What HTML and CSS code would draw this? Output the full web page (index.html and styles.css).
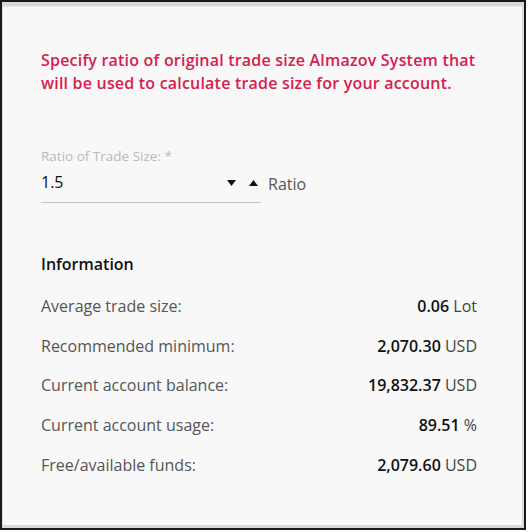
FILE: index.html
```html
<!DOCTYPE html>
<html lang="en">
<head>
    <meta charset="UTF-8">
    <title>Trade Size Ratio</title>
    <link rel="stylesheet" href="styles.css">
</head>
<body>
    <div class="frame">
        <div class="panel">
            <p class="intro">Specify ratio of original trade size Almazov System that will be used to calculate trade size for your account.</p>

            <div class="field">
                <label class="field-label" for="ratio">Ratio of Trade Size: *</label>
                <div class="field-row">
                    <div class="field-input">
                        <span id="ratio" class="field-value">1.5</span>
                        <svg class="spin" width="9" height="6" viewBox="0 0 9 6"><polygon points="0,0 9,0 4.5,6" fill="#111"/></svg>
                        <svg class="spin" width="9" height="6" viewBox="0 0 9 6"><polygon points="0,6 9,6 4.5,0" fill="#111"/></svg>
                    </div>
                    <span class="field-unit">Ratio</span>
                </div>
            </div>

            <h3 class="info-title">Information</h3>
            <div class="info-list">
                <div class="info-row">
                    <span class="info-label">Average trade size:</span>
                    <span class="info-value"><b>0.06</b> Lot</span>
                </div>
                <div class="info-row">
                    <span class="info-label">Recommended minimum:</span>
                    <span class="info-value"><b>2,070.30</b> USD</span>
                </div>
                <div class="info-row">
                    <span class="info-label">Current account balance:</span>
                    <span class="info-value"><b>19,832.37</b> USD</span>
                </div>
                <div class="info-row">
                    <span class="info-label">Current account usage:</span>
                    <span class="info-value"><b>89.51</b> %</span>
                </div>
                <div class="info-row">
                    <span class="info-label">Free/available funds:</span>
                    <span class="info-value"><b>2,079.60</b> USD</span>
                </div>
            </div>
        </div>
    </div>
</body>
</html>
```

FILE: styles.css
```css
body {
    margin: 0;
    background-color: #fff;
    font-family: 'Open Sans', 'Noto Sans', sans-serif;
    color: #222;
}

.frame {
    width: 526px;
    height: 530px;
    border: 2px solid #1a1a1a;
    background-color: #d9d9d9;
    padding: 4px 2px 3px 1px;
    box-sizing: border-box;
}

.panel {
    height: 100%;
    background-color: #f8f8f8;
    border-top: 1px solid #ececec;
    padding: 42px 45px 0 38px;
    box-sizing: border-box;
}

.intro {
    margin: 0;
    color: #d6204f;
    font-size: 16px;
    font-weight: 600;
    line-height: 23px;
    letter-spacing: 0.2px;
}

.field {
    margin-top: 52px;
}

.field-label {
    display: block;
    font-size: 13.5px;
    color: #b8b8b8;
    line-height: 18px;
}

.field-row {
    display: flex;
    align-items: flex-start;
    gap: 7px;
    margin-top: 6px;
}

.field-input {
    display: flex;
    align-items: center;
    width: 220px;
    border-bottom: 1px solid #c4c4c4;
    padding-bottom: 9px;
}

.field-value {
    flex: 1;
    font-size: 16px;
    line-height: 22px;
    color: #111;
}

.spin {
    margin-top: 2px;
}

.spin + .spin {
    margin-left: 13px;
    margin-right: 3px;
}

.field-unit {
    font-size: 16px;
    line-height: 22px;
    margin-top: 2px;
    color: #555;
}

.info-title {
    margin: 50px 0 0;
    font-size: 16px;
    line-height: 22px;
    font-weight: 600;
    color: #111;
}

.info-list {
    margin-top: 20px;
    display: flex;
    flex-direction: column;
    gap: 17.7px;
}

.info-row {
    display: flex;
    justify-content: space-between;
    font-size: 16px;
    line-height: 22px;
}

.info-label {
    color: #555;
}

.info-value {
    color: #444;
}

.info-value b {
    font-weight: 600;
    color: #111;
}
```
